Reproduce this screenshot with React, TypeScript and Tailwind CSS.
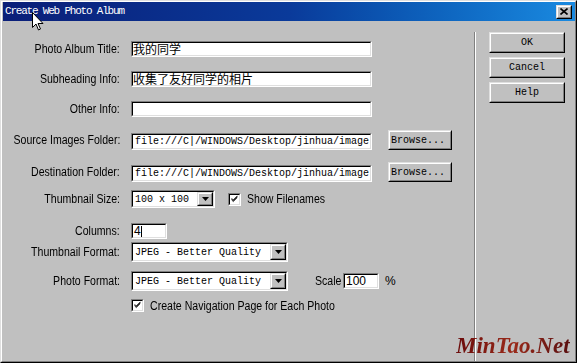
import type { ReactNode } from 'react'

function Sunken({ className, children }: { className: string; children?: ReactNode }) {
  return (
    <div className={`border border-t-[#808080] border-l-[#808080] border-b-white border-r-white ${className}`}>
      <div className="h-full w-full flex items-center bg-white border border-t-black border-l-black border-b-[#dfdfdf] border-r-[#dfdfdf]">
        {children}
      </div>
    </div>
  )
}

function Raised({ className, children }: { className: string; children?: ReactNode }) {
  return (
    <div className={`border border-t-[#dfdfdf] border-l-[#dfdfdf] border-b-black border-r-black ${className}`}>
      <div className="h-full w-full flex items-center justify-center bg-[#c0c0c0] border border-t-white border-l-white border-b-[#808080] border-r-[#808080]">
        {children}
      </div>
    </div>
  )
}

function Select({ value, className }: { value: string; className: string }) {
  return (
    <Sunken className={className}>
      <span className="flex-1 pl-[2px] font-['Liberation_Mono',monospace] text-[10px] text-black whitespace-nowrap">{value}</span>
      <Raised className="w-[16px] h-full shrink-0">
        <svg width="7" height="4" viewBox="0 0 7 4">
          <path d="M0 0h7L3.5 4z" fill="#000" />
        </svg>
      </Raised>
    </Sunken>
  )
}

function Check() {
  return (
    <Sunken className="w-[13px] h-[13px] shrink-0">
      <svg width="11" height="11" viewBox="0 0 11 11" className="block">
        <path d="M2 5l2 2 5-5M2 6l2 2 5-5M2 4l2 2 5-5" stroke="#000" strokeWidth="1" fill="none" />
      </svg>
    </Sunken>
  )
}

function Label({ children }: { children: ReactNode }) {
  return (
    <div className="w-[117px] shrink-0 mr-[11px] flex justify-end whitespace-nowrap">
      <span className="inline-block scale-x-[0.88] origin-right">{children}</span>
    </div>
  )
}

function Narrow({ className, children }: { className: string; children: ReactNode }) {
  return <span className={`inline-block whitespace-nowrap scale-x-[0.88] origin-left ${className}`}>{children}</span>
}

export default function App() {
  return (
    <div className="relative w-[577px] h-[363px] overflow-hidden bg-[#c0c0c0] border border-t-[#dfdfdf] border-l-[#dfdfdf] border-b-black border-r-black font-['Liberation_Sans',Arial,sans-serif] text-[12px] text-black">
      <div className="h-full flex flex-col border border-t-white border-l-white border-b-[#808080] border-r-[#808080] pl-px">
        {/* タイトルバー */}
        <div className="h-[19px] shrink-0 flex items-center bg-gradient-to-r from-[#0a1e78] via-[#0a3a9a] to-[#1a8ae0] pl-[2px] pr-[3px]">
          <span className="flex-1 font-['Liberation_Mono',monospace] text-[11px] tracking-[-1.2px] text-white">Create Web Photo Album</span>
          <Raised className="w-[16px] h-[14px]">
            <svg width="8" height="7" viewBox="0 0 8 7">
              <path d="M0.5 0.5l7 6M7.5 0.5l-7 6" stroke="#000" strokeWidth="1.6" />
            </svg>
          </Raised>
        </div>

        <div className="flex-1 flex">
          {/* フォーム */}
          <div className="w-[471px] flex flex-col">
            <div className="mt-[20px] h-[16px] flex items-center">
              <Label>Photo Album Title:</Label>
              <Sunken className="w-[241px] h-[16px]">
                <span className="font-['Noto_Sans_CJK_SC',sans-serif] text-[12px] leading-[14px] whitespace-nowrap">我的同学</span>
              </Sunken>
            </div>
            <div className="mt-[14px] h-[16px] flex items-center">
              <Label>Subheading Info:</Label>
              <Sunken className="w-[241px] h-[16px]">
                <span className="font-['Noto_Sans_CJK_SC',sans-serif] text-[12px] leading-[14px] whitespace-nowrap">收集了友好同学的相片</span>
              </Sunken>
            </div>
            <div className="mt-[14px] h-[16px] flex items-center">
              <Label>Other Info:</Label>
              <Sunken className="w-[241px] h-[16px]" />
            </div>
            <div className="mt-[13px] h-[20px] flex items-center">
              <Label>Source Images Folder:</Label>
              <Sunken className="w-[241px] h-[17px] self-end">
                <span className="pl-[2px] font-['Liberation_Mono',monospace] text-[10px] whitespace-nowrap">file:///C|/WINDOWS/Desktop/jinhua/image</span>
              </Sunken>
              <Raised className="ml-[16px] w-[64px] h-[20px]">
                <span className="font-['Liberation_Mono',monospace] text-[10px] -ml-[4px]">Browse...</span>
              </Raised>
            </div>
            <div className="mt-[12px] h-[20px] flex items-center">
              <Label>Destination Folder:</Label>
              <Sunken className="w-[241px] h-[17px] self-end">
                <span className="pl-[2px] font-['Liberation_Mono',monospace] text-[10px] whitespace-nowrap">file:///C|/WINDOWS/Desktop/jinhua/image</span>
              </Sunken>
              <Raised className="ml-[16px] w-[64px] h-[20px]">
                <span className="font-['Liberation_Mono',monospace] text-[10px] -ml-[4px]">Browse...</span>
              </Raised>
            </div>
            <div className="mt-[8px] h-[18px] flex items-center">
              <Label>Thumbnail Size:</Label>
              <Select value="100 x 100" className="w-[84px] h-[18px]" />
              <div className="ml-[13px]">
                <Check />
              </div>
              <Narrow className="ml-[6px]">Show Filenames</Narrow>
            </div>
            <div className="mt-[15px] h-[16px] flex items-center">
              <Label>Columns:</Label>
              <Sunken className="w-[36px] h-[16px]">
                <span className="pl-[1px] text-[12px] leading-none">4</span>
                <span className="w-px h-[11px] bg-black" />
              </Sunken>
            </div>
            <div className="mt-[3px] h-[20px] flex items-center">
              <Label>Thumbnail Format:</Label>
              <Select value="JPEG - Better Quality" className="w-[157px] h-[20px]" />
            </div>
            <div className="mt-[9px] h-[20px] flex items-center">
              <Label>Photo Format:</Label>
              <Select value="JPEG - Better Quality" className="w-[157px] h-[20px]" />
              <Narrow className="ml-[27px] w-[28px]">Scale</Narrow>
              <Sunken className="w-[36px] h-[16px]">
                <span className="pl-[1px] text-[12px] leading-none">100</span>
              </Sunken>
              <span className="ml-[6px]">%</span>
            </div>
            <div className="mt-[8px] h-[13px] flex items-center">
              <div className="w-[128px] shrink-0" />
              <Check />
              <Narrow className="ml-[6px]">Create Navigation Page for Each Photo</Narrow>
            </div>
          </div>

          {/* 区切り線 */}
          <div className="mt-[11px] flex shrink-0">
            <div className="w-px bg-[#808080]" />
            <div className="w-px bg-white" />
          </div>

          {/* ボタン */}
          <div className="flex flex-col gap-[4px] pt-[11px] pl-[13px]">
            {['OK', 'Cancel', 'Help'].map(t => (
              <Raised key={t} className="w-[76px] h-[21px]">
                <span className="font-['Liberation_Mono',monospace] text-[10px]">{t}</span>
              </Raised>
            ))}
          </div>
        </div>
      </div>

      {/* 透かし */}
      <span className="absolute left-[455px] top-[333px] font-['Liberation_Serif',serif] italic font-bold text-[23px] leading-none bg-gradient-to-r from-[#6a0a0a] via-[#9a2a1a] to-[#5a1010] bg-clip-text text-transparent">
        MinTao.Net
      </span>

      {/* マウスカーソル */}
      <svg className="absolute left-[31px] top-[11px]" width="12" height="20" viewBox="0 0 12 20">
        <path d="M0.5 0.5v15l3.5-3.5 2.5 6 2-1-2.5-5.5h5z" fill="#fff" stroke="#000" strokeWidth="1" />
      </svg>
    </div>
  )
}
